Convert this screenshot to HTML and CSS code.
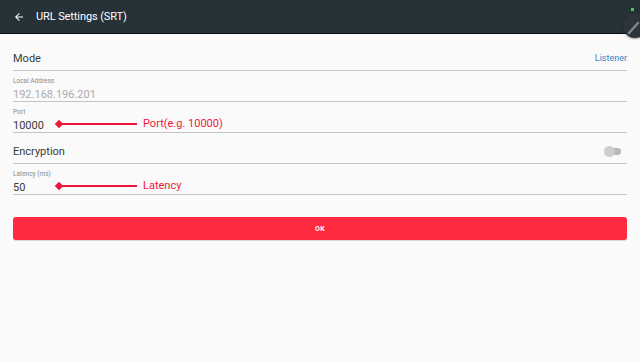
FILE: index.html
```html
<!DOCTYPE html>
<html>
<head>
<meta charset="utf-8">
<link rel="stylesheet" href="styles.css">
</head>
<body>
<header class="appbar">
  <svg class="back" width="12" height="12" viewBox="0 0 24 24"><path d="M20 11H7.83l5.59-5.59L12 4l-8 8 8 8 1.41-1.41L7.83 13H20v-2z" fill="#fff"/></svg>
  <span class="title">URL Settings (SRT)</span>
  <span class="dot"></span>
  <span class="fab"><svg width="24" height="24" viewBox="0 0 24 24"><line x1="6" y1="19" x2="15" y2="9" stroke="#80868b" stroke-width="2.6" stroke-linecap="round"/></svg></span>
</header>
<main class="content">
  <div class="row">
    <span class="row-label">Mode</span>
    <span class="link">Listener</span>
  </div>
  <div class="field">
    <span class="field-label">Local Address</span>
    <span class="field-value muted">192.168.196.201</span>
  </div>
  <div class="field">
    <span class="field-label">Port</span>
    <span class="field-value">10000</span>
    <span class="note"><span class="diamond"></span><span class="stem"></span><span class="note-text">Port(e.g. 10000)</span></span>
  </div>
  <div class="row">
    <span class="row-label">Encryption</span>
    <span class="toggle"><span class="track"></span><span class="thumb"></span></span>
  </div>
  <div class="field">
    <span class="field-label">Latency (ms)</span>
    <span class="field-value">50</span>
    <span class="note"><span class="diamond"></span><span class="stem"></span><span class="note-text">Latency</span></span>
  </div>
  <button class="ok">OK</button>
</main>
</body>
</html>
```
FILE: styles.css
```css
* { box-sizing: border-box; }
html, body { margin: 0; padding: 0; }
body {
  width: 640px;
  height: 362px;
  background: #fafafa;
  font-family: Roboto, "Noto Sans", sans-serif;
  overflow: hidden;
}
.appbar {
  position: relative;
  height: 34px;
  background: #263238;
  border-bottom: 1px solid #0b0f12;
  display: flex;
  align-items: center;
  padding-left: 13px;
}
.back { margin-right: 11px; }
.title {
  color: #fff;
  font-size: 11px;
  letter-spacing: -0.1px;
}
.dot {
  position: absolute;
  left: 631px;
  top: 8px;
  width: 3px;
  height: 3px;
  background: #2fd34a;
}
.fab {
  position: absolute;
  left: 623px;
  top: 14px;
  width: 24px;
  height: 24px;
  border-radius: 50%;
  background: #2c353b;
  box-shadow: 0 1px 2px rgba(0,0,0,0.35);
  display: flex;
  align-items: center;
  justify-content: flex-start;
}
.content {
  padding: 0 13px;
}
.row {
  display: flex;
  align-items: center;
  justify-content: space-between;
  border-bottom: 1px solid #c4c4c4;
  height: 37px;
  padding-top: 12px;
}
.row + .row, .field + .row { height: 31px; padding-top: 6px; }
.row-label {
  font-size: 11px;
  color: #3a3a3a;
}
.link {
  font-size: 9px;
  color: #3d82c9;
}
.field {
  position: relative;
  display: flex;
  flex-direction: column;
  border-bottom: 1px solid #c4c4c4;
  height: 31px;
  padding-top: 6px;
}
.field-label {
  font-size: 6.5px;
  color: #8a8a8a;
  line-height: 8px;
}
.field-value {
  font-size: 11px;
  color: #3a3a3a;
  line-height: 14px;
  margin-top: 3px;
}
.field-value.muted { color: #ababab; }
.toggle {
  position: relative;
  width: 18px;
  height: 12px;
  margin-right: 5px;
}
.track {
  position: absolute;
  left: 3px;
  top: 3px;
  width: 14px;
  height: 7px;
  border-radius: 4px;
  background: #b8b8b8;
}
.thumb {
  position: absolute;
  left: 0;
  top: 1px;
  width: 11px;
  height: 11px;
  border-radius: 50%;
  background: #cecece;
}
.note {
  position: absolute;
  left: 43px;
  top: 15px;
  display: flex;
  align-items: center;
}
.diamond {
  width: 6px;
  height: 6px;
  background: #f0173b;
  transform: rotate(45deg);
}
.stem {
  width: 77px;
  height: 2px;
  background: #f0173b;
  margin-left: -2px;
}
.note-text {
  font-size: 11px;
  color: #f0173b;
  margin-left: 6px;
}
.ok {
  display: block;
  width: 100%;
  margin-top: 22px;
  height: 23px;
  border: none;
  border-radius: 3px;
  background: #ff2a40;
  color: #fff;
  font-family: Roboto, sans-serif;
  font-size: 7px;
  font-weight: bold;
  letter-spacing: 0.3px;
  box-shadow: 0 1px 1px rgba(0,0,0,0.15);
}
```
